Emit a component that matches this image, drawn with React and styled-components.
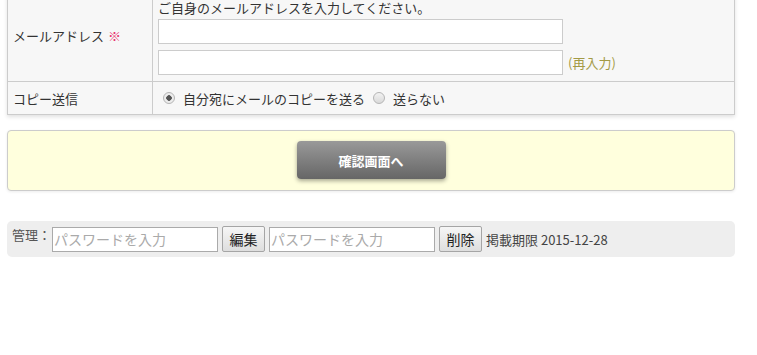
import React from "react";
import styled, { createGlobalStyle } from "styled-components";

const GlobalStyle = createGlobalStyle`
  body {
    margin: 0;
    background: #fff;
    font-family: "Noto Sans CJK JP", "Noto Sans", sans-serif;
    color: #333;
    font-size: 13px;
  }
`;

const Page = styled.div`
  width: 728px;
  padding: 0 0 0 7px;
  margin-top: -11px;
`;

const Table = styled.div`
  display: grid;
  grid-template-columns: 145px 1fr;
  border: 1px solid #ccc;
  background: #f7f7f7;
  box-shadow: 0 2px 4px rgba(0, 0, 0, 0.12);
`;

const Label = styled.div`
  display: flex;
  align-items: center;
  padding: 0 5px;
  border-right: 1px solid #ccc;
  border-bottom: ${(p) => (p.$last ? "none" : "1px solid #ccc")};
  font-size: 13px;
  color: #333;
`;

const Required = styled.span`
  color: #e8336e;
  margin-left: 4px;
`;

const Cell = styled.div`
  padding: ${(p) => (p.$compact ? "0 5px" : "10px 5px 6px")};
  height: ${(p) => (p.$compact ? "32px" : "auto")};
  border-bottom: ${(p) => (p.$last ? "none" : "1px solid #ccc")};
  display: flex;
  flex-direction: ${(p) => (p.$compact ? "row" : "column")};
  align-items: ${(p) => (p.$compact ? "center" : "flex-start")};
  gap: 6px;
`;

const Note = styled.div`
  font-size: 13px;
  line-height: 15px;
  margin-bottom: -2px;
`;

const InputRow = styled.div`
  display: flex;
  align-items: center;
  gap: 5px;
`;

const TextInput = styled.input`
  box-sizing: border-box;
  width: 405px;
  height: 25px;
  border: 1px solid #ccc;
  background: #fff;
  outline: none;
`;

const Reenter = styled.span`
  color: #a39a45;
  font-size: 13px;
`;

const RadioGroup = styled.label`
  display: flex;
  align-items: center;
  gap: 8px;
  margin-left: ${(p) => p.$ml || "0px"};
  font-size: 13px;
`;

const Radio = styled.span`
  box-sizing: border-box;
  width: 12px;
  height: 12px;
  border-radius: 50%;
  border: 1px solid #b5b5b5;
  background: ${(p) =>
    p.$checked
      ? "radial-gradient(circle, #555 0 2.5px, #ececec 3px)"
      : "linear-gradient(#f2f2f2, #d9d9d9)"};
`;

const ConfirmBox = styled.div`
  box-sizing: border-box;
  margin-top: 15px;
  height: 61px;
  border: 1px solid #ccc;
  border-radius: 4px;
  background: #ffffdd;
  display: flex;
  justify-content: center;
  align-items: flex-start;
  padding-top: 10px;
  box-shadow: 0 1px 3px rgba(0, 0, 0, 0.08);
`;

const ConfirmButton = styled.button`
  width: 149px;
  height: 38px;
  border: none;
  border-radius: 4px;
  background: linear-gradient(#999, #666);
  color: #fff;
  font-family: "Noto Sans CJK JP", sans-serif;
  font-size: 13px;
  font-weight: bold;
  box-shadow: 0 2px 4px rgba(0, 0, 0, 0.35);
`;

const AdminBar = styled.div`
  margin-top: 30px;
  height: 36px;
  background: #eee;
  border-radius: 5px;
  display: flex;
  align-items: center;
  padding: 0 5px;
  gap: 4px;
`;

const AdminLabel = styled.span`
  font-size: 13px;
  color: #555;
  align-self: flex-start;
  margin-top: 4px;
  margin-right: -3px;
`;

const PassInput = styled.input`
  box-sizing: border-box;
  width: 166px;
  height: 25px;
  border: 1px solid #aaa;
  padding: 0 1px;
  font-family: "Noto Sans CJK JP", sans-serif;
  font-size: 14px;
  background: #fff;
  &::placeholder {
    color: #aaa;
  }
`;

const SmallButton = styled.button`
  box-sizing: border-box;
  height: 26px;
  width: 43px;
  padding: 0;
  border: 1px solid #a5a5a5;
  border-radius: 2px;
  background: linear-gradient(#f6f6f6, #dedede);
  font-family: "Noto Sans CJK JP", sans-serif;
  font-size: 14px;
  color: #222;
`;

const Expiry = styled.span`
  font-size: 13px;
  color: #444;
`;

export default function App() {
  return (
    <>
      <GlobalStyle />
      <Page>
        <Table>
          <Label>
            メールアドレス<Required>※</Required>
          </Label>
          <Cell>
            <Note>ご自身のメールアドレスを入力してください。</Note>
            <TextInput />
            <InputRow>
              <TextInput />
              <Reenter>(再入力)</Reenter>
            </InputRow>
          </Cell>
          <Label $last>コピー送信</Label>
          <Cell $compact $last>
            <RadioGroup $ml="5px">
              <Radio $checked />
              自分宛にメールのコピーを送る
            </RadioGroup>
            <RadioGroup $ml="2px">
              <Radio />
              送らない
            </RadioGroup>
          </Cell>
        </Table>
        <ConfirmBox>
          <ConfirmButton>確認画面へ</ConfirmButton>
        </ConfirmBox>
        <AdminBar>
          <AdminLabel>管理：</AdminLabel>
          <PassInput placeholder="パスワードを入力" />
          <SmallButton>編集</SmallButton>
          <PassInput placeholder="パスワードを入力" />
          <SmallButton>削除</SmallButton>
          <Expiry>掲載期限 2015-12-28</Expiry>
        </AdminBar>
      </Page>
    </>
  );
}
